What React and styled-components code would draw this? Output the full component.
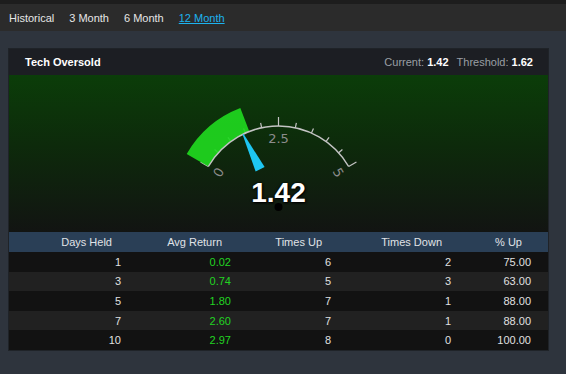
import React from "react";
import styled, { createGlobalStyle } from "styled-components";

const GlobalStyle = createGlobalStyle`
  html, body { margin: 0; padding: 0; }
  body {
    background: #2e343d;
    font-family: "Liberation Sans", Arial, Helvetica, sans-serif;
    width: 566px;
    height: 374px;
    overflow: hidden;
  }
`;

const TopBar = styled.div`
  height: 27px;
  border-top: 4px solid #1d1d1d;
  background: #2b2b2b;
  display: flex;
  align-items: center;
  gap: 15px;
  padding-left: 9px;
`;

const Tab = styled.a`
  font-size: 11px;
  color: ${(p) => (p.$active ? "#1db3ee" : "#e6e6e6")};
  text-decoration: ${(p) => (p.$active ? "underline" : "none")};
  cursor: pointer;
`;

const Panel = styled.div`
  margin: 17px 0 0 8px;
  width: 541px;
  box-sizing: border-box;
  border: 1px solid #1f2328;
  background: #111;
`;

const PanelHeader = styled.div`
  height: 26px;
  background: #1c1e23;
  display: flex;
  align-items: center;
  justify-content: space-between;
  padding: 0 15px 0 16px;
  font-size: 11px;
`;

const Title = styled.span`
  color: #fff;
  font-weight: bold;
`;

const Stats = styled.div`
  display: flex;
  gap: 8px;
`;

const StatLabel = styled.span`
  color: #9a9ea4;
`;

const StatValue = styled.b`
  color: #fff;
`;

const GaugeArea = styled.div`
  height: 157px;
  background: linear-gradient(180deg, #0b3d09 0%, #0d2a0b 45%, #121412 100%);
`;

const Row = styled.div`
  display: grid;
  grid-template-columns: 129px 110px 100px 120px 80px;
  height: ${(p) => (p.$head ? "20px" : "19.6px")};
  align-items: center;
  font-size: 11px;
  background: ${(p) => (p.$head ? "#2a3f56" : p.$even ? "#212121" : "#121212")};
`;

const Cell = styled.div`
  text-align: right;
  padding-right: ${(p) => (p.$head ? "26px" : "17px")};
  color: ${(p) => (p.$green ? "#22d422" : p.$head ? "#e0e3e7" : "#e0e0e0")};
`;

const CX = 269.5;
const CY = 132;
const R = 81;
const BAND_R = 106;
const ang = (v) => -60 + v * 24;
const pt = (r, deg) => {
  const a = (deg * Math.PI) / 180;
  return [CX + r * Math.sin(a), CY - r * Math.cos(a)];
};
const f = (n) => n.toFixed(2);

function Gauge({ value, threshold }) {
  const [ax, ay] = pt(R, -60);
  const [bx, by] = pt(R, 60);
  const arc = `M${f(ax)} ${f(ay)} A${R} ${R} 0 0 1 ${f(bx)} ${f(by)}`;
  const tA = ang(threshold);
  const [o1x, o1y] = pt(BAND_R, -60);
  const [o2x, o2y] = pt(BAND_R, tA);
  const [i2x, i2y] = pt(R, tA);
  const band = `M${f(ax)} ${f(ay)} L${f(o1x)} ${f(o1y)} A${BAND_R} ${BAND_R} 0 0 1 ${f(o2x)} ${f(o2y)} L${f(i2x)} ${f(i2y)} A${R} ${R} 0 0 0 ${f(ax)} ${f(ay)} Z`;

  const ticks = [];
  for (let v = 0; v <= 5.001; v += 0.5) {
    const major = Math.abs(v % 2.5) < 0.01 || Math.abs((v % 2.5) - 2.5) < 0.01;
    const len = major ? 9 : 5;
    const [x1, y1] = pt(R, ang(v));
    const [x2, y2] = pt(R + len, ang(v));
    ticks.push(<line key={v} x1={f(x1)} y1={f(y1)} x2={f(x2)} y2={f(y2)} />);
  }

  const vA = ang(value);
  const rad = (vA * Math.PI) / 180;
  const px = Math.cos(rad);
  const py = Math.sin(rad);
  const [tx, ty] = pt(R, vA);
  const [bsx, bsy] = pt(42, vA);
  const needle = [
    [tx + px * 0.6, ty + py * 0.6],
    [bsx + px * 5, bsy + py * 5],
    [bsx - px * 5, bsy - py * 5],
    [tx - px * 0.6, ty - py * 0.6],
  ]
    .map((p) => p.map(f).join(","))
    .join(" ");

  const labels = [0, 2.5, 5].map((v) => {
    const [lx, ly] = pt(69, ang(v));
    return (
      <text
        key={v}
        x={f(lx)}
        y={f(ly)}
        textAnchor="middle"
        dominantBaseline="central"
        transform={`rotate(${ang(v)} ${f(lx)} ${f(ly)})`}
        fill="#8c8c8c"
        fontSize="13"
        fontFamily="'DejaVu Sans', 'Liberation Sans', sans-serif"
      >
        {v}
      </text>
    );
  });

  return (
    <svg width="539" height="157" viewBox="0 0 539 157">
      <g stroke="#c4c4c4" strokeWidth="1.2">{ticks}</g>
      <path d={band} fill="#1fd81f" fillOpacity="0.92" />
      <path d={arc} fill="none" stroke="#c4c4c4" strokeWidth="1.5" />
      {labels}
      <polygon points={needle} fill="#1ec6f2" />
      <circle cx={CX} cy={CY} r="4" fill="#000" />
      <text
        x={CX}
        y="127"
        textAnchor="middle"
        fill="#fff"
        fontSize="28"
        fontWeight="bold"
        fontFamily="'Liberation Sans', Arial, sans-serif"
        style={{ textShadow: "0 0 3px #000, 1px 1px 2px #000" }}
      >
        {value.toFixed(2)}
      </text>
    </svg>
  );
}

const rows = [
  [1, "0.02", 6, 2, "75.00"],
  [3, "0.74", 5, 3, "63.00"],
  [5, "1.80", 7, 1, "88.00"],
  [7, "2.60", 7, 1, "88.00"],
  [10, "2.97", 8, 0, "100.00"],
];

export default function App() {
  return (
    <>
      <GlobalStyle />
      <TopBar>
        <Tab>Historical</Tab>
        <Tab>3 Month</Tab>
        <Tab>6 Month</Tab>
        <Tab $active>12 Month</Tab>
      </TopBar>
      <Panel>
        <PanelHeader>
          <Title>Tech Oversold</Title>
          <Stats>
            <span>
              <StatLabel>Current: </StatLabel>
              <StatValue>1.42</StatValue>
            </span>
            <span>
              <StatLabel>Threshold: </StatLabel>
              <StatValue>1.62</StatValue>
            </span>
          </Stats>
        </PanelHeader>
        <GaugeArea>
          <Gauge value={1.42} threshold={1.62} />
        </GaugeArea>
        <Row $head>
          <Cell $head>Days Held</Cell>
          <Cell $head>Avg Return</Cell>
          <Cell $head>Times Up</Cell>
          <Cell $head>Times Down</Cell>
          <Cell $head>% Up</Cell>
        </Row>
        {rows.map((r, i) => (
          <Row key={i} $even={i % 2 === 1}>
            <Cell>{r[0]}</Cell>
            <Cell $green>{r[1]}</Cell>
            <Cell>{r[2]}</Cell>
            <Cell>{r[3]}</Cell>
            <Cell>{r[4]}</Cell>
          </Row>
        ))}
      </Panel>
    </>
  );
}
